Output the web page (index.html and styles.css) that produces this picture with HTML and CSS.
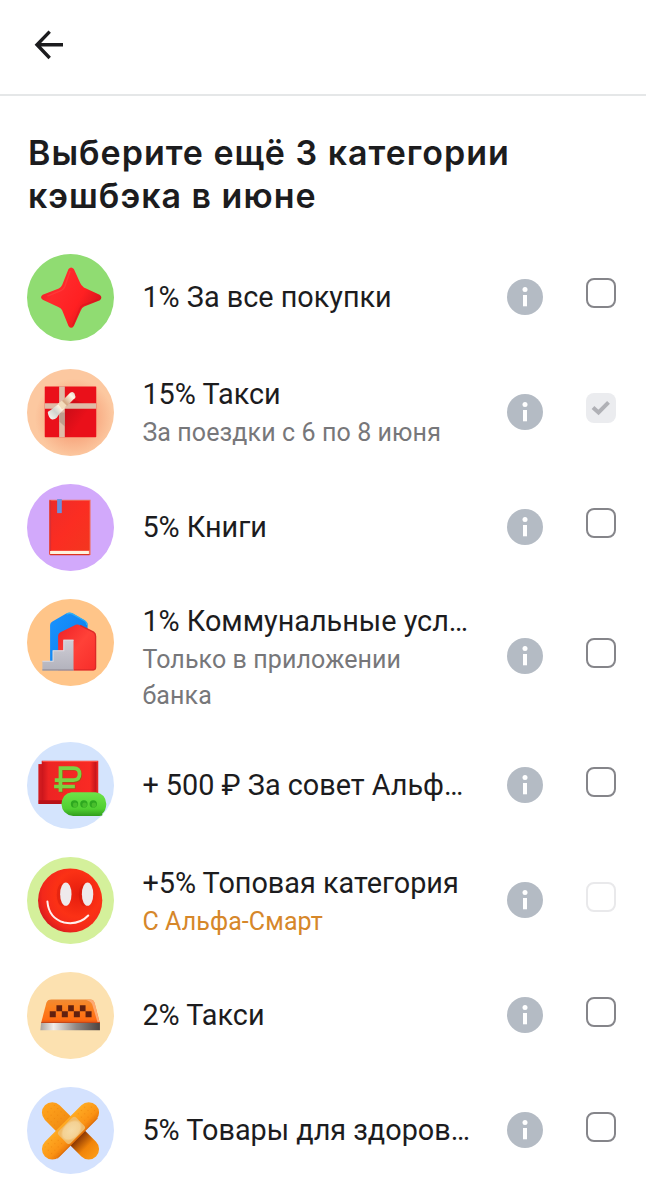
FILE: index.html
```html
<!DOCTYPE html>
<html lang="ru">
<head>
    <meta charset="UTF-8">
    <meta name="viewport" content="width=device-width, initial-scale=1.0">
    <title>Категории кэшбэка</title>
    <link rel="stylesheet" href="styles.css">
</head>
<body>
    <svg class="defs" width="0" height="0">
        <defs>
            <symbol id="info" viewBox="0 0 36 36">
                <circle cx="18" cy="18" r="18" fill="#b4bbc4"/>
                <circle cx="18" cy="10.5" r="2.5" fill="#fff"/>
                <rect x="16" y="16" width="4" height="11.3" fill="#fff"/>
            </symbol>
        </defs>
    </svg>

    <header class="topbar">
        <button class="back" aria-label="Назад">
            <svg width="30" height="32" viewBox="0 0 30 32" fill="none" stroke="#1c1c1e" stroke-width="3.4">
                <path d="M29 15.8H3M15.7 2.6L3 15.8l12.7 13.2"/>
            </svg>
        </button>
    </header>

    <main>
        <h1>Выберите ещё 3 категории<br>кэшбэка в июне</h1>

        <ul class="list">
            <li class="row">
                <svg class="icon" viewBox="21 25 260 260">
                    <defs>
                        <linearGradient id="star" x1="0" y1="0" x2="1" y2="0.6">
                            <stop offset="0" stop-color="#e01a25"/>
                            <stop offset="0.35" stop-color="#ff2a2c"/>
                            <stop offset="0.7" stop-color="#ff2022"/>
                            <stop offset="1" stop-color="#d5141c"/>
                        </linearGradient>
                    </defs>
                    <circle cx="151" cy="155" r="130" fill="#90dc72"/>
                    <path d="M145 70Q153 61 161 70L180 112Q183 120 191 125L238 147Q248 154 239 163L192 182Q185 186 182 193L161 240Q153 251 145 240L126 193Q123 187 116 184L68 162Q58 154 68 147L116 128Q123 125 126 118Z" fill="url(#star)"/>
                    <path d="M150 76L134 122Q131 130 124 134L82 151" fill="none" stroke="#ff5550" stroke-width="4" opacity="0.35"/>
                    <path d="M233 162L188 178Q181 182 178 190L158 238" fill="none" stroke="#c7101a" stroke-width="4" opacity="0.35"/>
                </svg>
                <div class="text">
                    <p class="name">1% За все покупки</p>
                </div>
                <svg class="info"><use href="#info"/></svg>
                <span class="check"></span>
            </li>

            <li class="row">
                <svg class="icon" viewBox="21 20 260 260">
                    <defs>
                        <radialGradient id="giftBg" cx="0.54" cy="0.56" r="0.5">
                            <stop offset="0.5" stop-color="#f8ac84"/>
                            <stop offset="0.9" stop-color="#fcc8a0"/>
                        </radialGradient>
                        <linearGradient id="giftShadow" x1="0" y1="0" x2="1" y2="0.8">
                            <stop offset="0" stop-color="#a80914" stop-opacity="0.6"/>
                            <stop offset="0.6" stop-color="#a80914" stop-opacity="0"/>
                        </linearGradient>
                        <linearGradient id="bow" x1="0" y1="1" x2="1" y2="0">
                            <stop offset="0" stop-color="#fffdf5"/>
                            <stop offset="0.28" stop-color="#cfd3cd"/>
                            <stop offset="0.45" stop-color="#fff5e2"/>
                            <stop offset="0.62" stop-color="#d5a882"/>
                            <stop offset="0.85" stop-color="#fff8e8"/>
                            <stop offset="1" stop-color="#d9d0c0"/>
                        </linearGradient>
                    </defs>
                    <circle cx="151" cy="150" r="130" fill="url(#giftBg)"/>
                    <rect x="74" y="72" width="154" height="152" rx="2" fill="#ea101a"/>
                    <path d="M134 139L162 112L200 124H228V224H134Z" fill="url(#giftShadow)"/>
                    <path d="M117 72h17v152h-17z" fill="#dfbca7"/>
                    <path d="M74 122h154v17H74z" fill="#dfbca7"/>
                    <path d="M118 150h16v42l-16-14z" fill="#a9887a" opacity="0.6"/>
                    <path d="M83 150Q84 145 90 144L122 119L150 91Q158 85 163 93L166 103Q166 108 161 110L118 154L110 166Q104 172 96 171Q86 168 83 150Z" fill="url(#bow)"/>
                    <path d="M113 124l12-9 14 14-13 12z" fill="#f3dcbc"/>
                </svg>
                <div class="text two-line">
                    <p class="name">15% Такси</p>
                    <p class="note">За поездки с 6 по 8 июня</p>
                </div>
                <svg class="info"><use href="#info"/></svg>
                <span class="check checked">
                    <svg width="20" height="16" viewBox="0 0 20 16" fill="none" stroke="#b0b1b6" stroke-width="4">
                        <path d="M2 7.5l5.5 5L17.5 2.3"/>
                    </svg>
                </span>
            </li>

            <li class="row">
                <svg class="icon" viewBox="21 19 260 260">
                    <defs>
                        <linearGradient id="book" x1="0" y1="0" x2="1" y2="1">
                            <stop offset="0" stop-color="#ee2c29"/>
                            <stop offset="0.5" stop-color="#fb2d22"/>
                            <stop offset="1" stop-color="#f3361f"/>
                        </linearGradient>
                    </defs>
                    <circle cx="151" cy="149" r="130" fill="#d2a9fb"/>
                    <path d="M87 66H211V231H87z" fill="#f0705f"/>
                    <path d="M91 69H208V218H91z" fill="url(#book)"/>
                    <path d="M88 68h5v160h-5z" fill="#d82f35"/>
                    <path d="M90 219H206V228H90z" fill="#fff2dc"/>
                    <path d="M90 228H208V232H90z" fill="#dd321f"/>
                    <path d="M111 64h14v42h-14z" fill="#6c8fde"/>
                </svg>
                <div class="text">
                    <p class="name">5% Книги</p>
                </div>
                <svg class="info"><use href="#info"/></svg>
                <span class="check"></span>
            </li>

            <li class="row">
                <svg class="icon" viewBox="21 20 260 260">
                    <defs>
                        <linearGradient id="houseBlue" x1="0" y1="0" x2="1" y2="1">
                            <stop offset="0" stop-color="#1a93ff"/>
                            <stop offset="1" stop-color="#087be8"/>
                        </linearGradient>
                        <linearGradient id="houseRed" x1="0" y1="0" x2="1" y2="1">
                            <stop offset="0" stop-color="#ee2026"/>
                            <stop offset="0.5" stop-color="#ff4138"/>
                            <stop offset="1" stop-color="#f72d2a"/>
                        </linearGradient>
                        <linearGradient id="stairs" x1="0" y1="0" x2="0" y2="1">
                            <stop offset="0" stop-color="#d0ced6"/>
                            <stop offset="1" stop-color="#b2b2bc"/>
                        </linearGradient>
                    </defs>
                    <circle cx="151" cy="150" r="130" fill="#ffc589"/>
                    <path d="M90 225V98Q90 91 97 87L137 64Q148 58 159 64L194 84Q202 89 202 98V225Z" fill="url(#houseBlue)"/>
                    <path d="M139 65Q148 60 158 65L193 85Q200 89 200 98" fill="none" stroke="#2fb0f6" stroke-width="4"/>
                    <path d="M114 233V130Q114 123 121 119L162 99Q171 94 180 99L220 119Q227 123 227 131V225Q227 233 219 233Z" fill="url(#houseRed)"/>
                    <path d="M180 99L220 119Q226 123 226 131V224Q226 231 219 232H160" fill="none" stroke="#dc2927" stroke-width="4"/>
                    <path d="M67 205H98V174H130V142H160V234H67Z" fill="url(#stairs)"/>
                    <path d="M67 206H99V175H131V143H160" fill="none" stroke="#dcdce2" stroke-width="3"/>
                    <path d="M67 232H160" stroke="#8d8790" stroke-width="3"/>
                </svg>
                <div class="text two-line">
                    <p class="name">1% Коммунальные усл…</p>
                    <p class="note">Только в приложении<br>банка</p>
                </div>
                <svg class="info"><use href="#info"/></svg>
                <span class="check"></span>
            </li>

            <li class="row">
                <svg class="icon" viewBox="21 19 260 260">
                    <defs>
                        <linearGradient id="bill" x1="0" y1="0" x2="1" y2="0">
                            <stop offset="0" stop-color="#c9151c"/>
                            <stop offset="0.12" stop-color="#ed2423"/>
                            <stop offset="0.85" stop-color="#f92a24"/>
                            <stop offset="0.95" stop-color="#c9151b"/>
                            <stop offset="1" stop-color="#f02a26"/>
                        </linearGradient>
                        <linearGradient id="bubble" x1="0" y1="0" x2="0" y2="1">
                            <stop offset="0" stop-color="#6ee349"/>
                            <stop offset="0.7" stop-color="#50cf31"/>
                            <stop offset="1" stop-color="#319d1d"/>
                        </linearGradient>
                    </defs>
                    <circle cx="151" cy="149" r="130" fill="#d4e4fd"/>
                    <path d="M55 85H80V204H55z" fill="#d21a1f"/>
                    <path d="M65 75H234V196H65z" fill="url(#bill)"/>
                    <path d="M56 193H150V204H56z" fill="#b81118"/>
                    <path d="M67 77H232" stroke="#ff5045" stroke-width="3"/>
                    <g transform="translate(2 2)" fill="none" stroke="#9c5a14" stroke-width="11">
                        <path d="M121 168V97H160Q178 97 178 115T160 133H104M104 152H164"/>
                    </g>
                    <path d="M121 168V97H160Q178 97 178 115T160 133H104M102 152H164" fill="none" stroke="#7bd343" stroke-width="11"/>
                    <path d="M154 169H226Q256 173 258 204Q257 224 246 233V239L237 240H159Q126 236 124 205Q126 173 154 169Z" fill="url(#bubble)"/>
                    <g fill="#2da81f">
                        <circle cx="163" cy="204" r="11"/>
                        <circle cx="191" cy="204" r="11"/>
                        <circle cx="219" cy="204" r="11"/>
                    </g>
                    <g fill="#49bd2d">
                        <circle cx="165" cy="207" r="7"/>
                        <circle cx="193" cy="207" r="7"/>
                        <circle cx="221" cy="207" r="7"/>
                    </g>
                </svg>
                <div class="text">
                    <p class="name">+ 500 ₽ За совет Альф…</p>
                </div>
                <svg class="info"><use href="#info"/></svg>
                <span class="check"></span>
            </li>

            <li class="row">
                <svg class="icon" viewBox="21 22 260 260">
                    <defs>
                        <radialGradient id="smile" cx="0.62" cy="0.4" r="0.65">
                            <stop offset="0" stop-color="#e51d0e"/>
                            <stop offset="0.55" stop-color="#fb3115"/>
                            <stop offset="0.85" stop-color="#f3281b"/>
                            <stop offset="1" stop-color="#d81c1e"/>
                        </radialGradient>
                    </defs>
                    <circle cx="151" cy="152" r="130" fill="#d4f09b"/>
                    <circle cx="150" cy="152" r="96" fill="url(#smile)"/>
                    <ellipse cx="126" cy="135" rx="16" ry="34" fill="#bd1009" opacity="0.3"/>
                    <ellipse cx="191" cy="135" rx="15" ry="34" fill="#bd1009" opacity="0.3"/>
                    <ellipse cx="137" cy="133" rx="17" ry="35" fill="#eeeaec"/>
                    <ellipse cx="202" cy="133" rx="17" ry="35" fill="#eeeaec"/>
                    <path d="M82 155Q86 205 132 218Q177 226 204 197" fill="none" stroke="#fff0ef" stroke-width="6" stroke-linecap="round"/>
                </svg>
                <div class="text two-line">
                    <p class="name">+5% Топовая категория</p>
                    <p class="note smart">С Альфа-Смарт</p>
                </div>
                <svg class="info"><use href="#info"/></svg>
                <span class="check disabled"></span>
            </li>

            <li class="row">
                <svg class="icon" viewBox="21 19 260 260">
                    <defs>
                        <linearGradient id="cab" x1="0" y1="0" x2="0" y2="1">
                            <stop offset="0" stop-color="#ef8a35"/>
                            <stop offset="0.3" stop-color="#fb8320"/>
                            <stop offset="0.85" stop-color="#ff6c12"/>
                            <stop offset="1" stop-color="#d9501a"/>
                        </linearGradient>
                        <linearGradient id="metal" x1="0" y1="0" x2="1" y2="0">
                            <stop offset="0" stop-color="#a9a19c"/>
                            <stop offset="0.22" stop-color="#f1edea"/>
                            <stop offset="0.6" stop-color="#8f8886"/>
                            <stop offset="1" stop-color="#4c4340"/>
                        </linearGradient>
                    </defs>
                    <circle cx="151" cy="149" r="130" fill="#fce1b0"/>
                    <path d="M79 111Q82 101 94 101H211Q220 101 223 111L239 172H63Z" fill="url(#cab)"/>
                    <path d="M195 102H211Q220 102 223 111L238 170H232L216 116Q211 105 195 102Z" fill="#ffb284" opacity="0.8"/>
                    <path d="M63 171H239V193H61Z" fill="url(#metal)"/>
                    <path d="M64 170H239" stroke="#c84716" stroke-width="3"/>
                    <path d="M109 118h17v18h-17zM144 118h17v18h-17zM179 118h17v18h-17zM89 136h18v18H89zM125 136h18v18h-18zM161 136h18v18h-18zM196 136h18v18h-18z" fill="#61200f"/>
                </svg>
                <div class="text">
                    <p class="name">2% Такси</p>
                </div>
                <svg class="info"><use href="#info"/></svg>
                <span class="check"></span>
            </li>

            <li class="row">
                <svg class="icon" viewBox="21 22 260 260">
                    <defs>
                        <linearGradient id="plaster" x1="0" y1="0" x2="0" y2="1">
                            <stop offset="0" stop-color="#ffab23"/>
                            <stop offset="0.7" stop-color="#fb9314"/>
                            <stop offset="1" stop-color="#e9780b"/>
                        </linearGradient>
                        <linearGradient id="plasterBack" x1="0" y1="0" x2="1" y2="0">
                            <stop offset="0" stop-color="#ffa31d"/>
                            <stop offset="0.5" stop-color="#ed8610"/>
                            <stop offset="0.65" stop-color="#8e3a04"/>
                            <stop offset="0.82" stop-color="#f18409"/>
                            <stop offset="1" stop-color="#fb9a17"/>
                        </linearGradient>
                        <radialGradient id="pad">
                            <stop offset="0" stop-color="#f6dba5"/>
                            <stop offset="0.8" stop-color="#f4d193"/>
                            <stop offset="1" stop-color="#f0bb69"/>
                        </radialGradient>
                        <pattern id="dots" width="14" height="14" patternUnits="userSpaceOnUse">
                            <circle cx="7" cy="7" r="2" fill="#e87c06" opacity="0.5"/>
                        </pattern>
                    </defs>
                    <circle cx="151" cy="152" r="130" fill="#d4e2fe"/>
                    <g transform="rotate(45 151 153)">
                        <rect x="43" y="122" width="216" height="62" rx="31" fill="url(#plasterBack)"/>
                        <rect x="50" y="126" width="70" height="54" rx="27" fill="url(#dots)"/>
                    </g>
                    <g transform="rotate(-45 151 153)">
                        <rect x="43" y="122" width="216" height="62" rx="31" fill="url(#plaster)"/>
                        <rect x="50" y="127" width="62" height="52" rx="26" fill="url(#dots)"/>
                        <rect x="190" y="127" width="62" height="52" rx="26" fill="url(#dots)"/>
                        <rect x="117" y="129" width="74" height="50" rx="9" fill="url(#pad)"/>
                        <path d="M65 183H236" stroke="#d96a09" stroke-width="3" opacity="0.7"/>
                    </g>
                </svg>
                <div class="text">
                    <p class="name">5% Товары для здоров…</p>
                </div>
                <svg class="info"><use href="#info"/></svg>
                <span class="check"></span>
            </li>
        </ul>
    </main>
</body>
</html>
```
FILE: styles.css
```css
* {
    box-sizing: border-box;
}

body {
    margin: 0;
    height: 1200px;
    overflow: hidden;
    background-color: #fff;
    color: #1c1c1e;
    font-family: Roboto, "Noto Sans", sans-serif;
}

.defs {
    display: block;
}

.topbar {
    display: flex;
    height: 96px;
    padding: 29px 34px 0;
    border-bottom: 2px solid #e5e7e8;
}

.back {
    width: 30px;
    height: 32px;
    padding: 0;
    border: none;
    background: none;
}

.back svg {
    display: block;
}

h1 {
    margin: 0;
    padding: 35px 28px 0;
    height: 143.3px;
    font-family: Inter, Roboto, sans-serif;
    font-size: 34px;
    font-weight: 600;
    line-height: 43px;
    letter-spacing: 1px;
}

.list {
    margin: 0;
    padding: 0;
    list-style: none;
}

.row {
    display: flex;
    align-items: center;
    padding: 14.3px 30px 14.3px 27px;
}

.icon {
    flex: none;
    align-self: flex-start;
    width: 87px;
    height: 87px;
    margin-right: 28.4px;
    margin-bottom: -0.6px;
}

.text {
    flex: 1;
    min-width: 0;
    white-space: nowrap;
}

.two-line {
    padding: 4px 0 0;
}

.name,
.note {
    margin: 0;
    line-height: 36px;
}

.name {
    font-size: 28.8px;
}

.note {
    margin-top: 3px;
    color: #77777a;
    font-size: 25px;
    letter-spacing: 0.1px;
}

.smart {
    color: #d6872a;
}

.info {
    flex: none;
    width: 36px;
    height: 36px;
    margin-right: 43px;
}

.check {
    display: flex;
    flex: none;
    align-items: center;
    justify-content: center;
    width: 30px;
    height: 30px;
    margin-bottom: 7px;
    border: 2.5px solid #85858a;
    border-radius: 8px;
}

.checked {
    border: none;
    background-color: #ebecef;
}

.disabled {
    border-color: #e9e9eb;
}
```
